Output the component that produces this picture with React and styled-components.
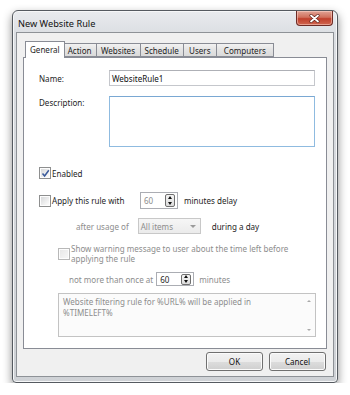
import React from "react";
import styled, { createGlobalStyle } from "styled-components";

const Global = createGlobalStyle`
  html, body { margin: 0; padding: 0; background: #ffffff; }
  body { font-family: "Noto Sans", "Open Sans", sans-serif; font-size: 8.05px; color: #1e1e1e; }
  * { box-sizing: border-box; }
`;

const Window = styled.div`
  margin: 10px 0 0 12px;
  width: 326px;
  height: 373px;
  border: 1px solid #555a60;
  border-radius: 6px 6px 4px 4px;
  background: linear-gradient(#e9ebee 0px, #dcdfe3 22px, #d4d7db 60%, #cfd2d6 100%);
  box-shadow: 0 4px 10px rgba(0, 0, 0, 0.45), inset 0 0 0 1px #f6f7f8;
  display: flex;
  flex-direction: column;
`;

const TitleBar = styled.div`
  height: 21px;
  display: flex;
  align-items: flex-start;
  justify-content: space-between;
  padding-left: 5px;
  padding-right: 4px;
`;

const Title = styled.span`
  font-size: 9.2px;
  color: #111;
  margin-top: 6px;
`;

const CloseButton = styled.div`
  width: 37px;
  height: 15px;
  border: 1px solid #6d2b25;
  border-top: none;
  border-radius: 0 0 4px 4px;
  background: linear-gradient(#e1a496 0%, #d0705c 45%, #c0402c 55%, #d06650 100%);
  box-shadow: inset 0 0 0 1px rgba(255, 220, 210, 0.5);
  display: flex;
  align-items: center;
  justify-content: center;
`;

const Client = styled.div`
  flex: 1;
  margin: 0 3px 5px 3px;
  background: #f0f0f0;
  border: 1px solid #8e9297;
  padding: 8px 6px 0 6px;
  display: flex;
  flex-direction: column;
`;

const TabStrip = styled.div`
  display: flex;
  align-items: flex-end;
  height: 16px;
  padding-left: 2px;
  position: relative;
  z-index: 1;
`;

const Tab = styled.div`
  height: ${(p) => (p.$active ? "17px" : "14px")};
  padding: 0 ${(p) => (p.$active ? "4px" : "4px")};
  padding-bottom: ${(p) => (p.$active ? "2px" : "0")};
  margin-right: ${(p) => (p.$active ? "-1px" : "0")};
  margin-bottom: ${(p) => (p.$active ? "-1px" : "0")};
  margin-left: ${(p) => (p.$first ? "0" : "-1px")};
  border: 1px solid #898c95;
  border-bottom: ${(p) => (p.$active ? "none" : "1px solid #898c95")};
  background: ${(p) => (p.$active ? "#ffffff" : "linear-gradient(#f2f2f2, #e3e3e3 50%, #dadada)")};
  display: flex;
  align-items: center;
  color: #1e1e1e;
  white-space: nowrap;
  position: relative;
  z-index: ${(p) => (p.$active ? 2 : 1)};
  min-width: ${(p) => p.$w}px;
  justify-content: center;
`;

const Panel = styled.div`
  width: 304px;
  height: 292px;
  background: #ffffff;
  border: 1px solid #898c95;
  padding: 12px 10px 0 15px;
  display: flex;
  flex-direction: column;
`;

const FieldRow = styled.div`
  display: grid;
  grid-template-columns: 70px 206px;
  align-items: ${(p) => (p.$top ? "start" : "center")};
  margin-top: ${(p) => p.$mt || 0}px;
`;

const Label = styled.span`
  color: #1e1e1e;
  padding-top: ${(p) => (p.$top ? "1px" : "0")};
`;

const TextInput = styled.div`
  height: ${(p) => p.$h}px;
  border: 1px solid ${(p) => (p.$focus ? "#8fbbe0" : "#c5c7cc")};
  border-top-color: ${(p) => (p.$focus ? "#7aa8d3" : "#aeb0b6")};
  background: #fff;
  padding: 2px 2px;
  color: #111;
  display: flex;
  align-items: ${(p) => (p.$focus ? "flex-start" : "center")};
`;

const Row = styled.div`
  display: flex;
  align-items: center;
  margin-top: ${(p) => p.$mt || 0}px;
  margin-left: ${(p) => p.$ml || 0}px;
  color: ${(p) => (p.$dim ? "#8d8d8d" : "#1e1e1e")};
`;

const RowLabel = styled.span`
  width: ${(p) => p.$w}px;
  flex: none;
`;

const Box = styled.span`
  width: 12px;
  height: 12px;
  flex: none;
  border: 1px solid ${(p) => (p.$dim ? "#b8b8b8" : "#8e8f8f")};
  background: ${(p) =>
    p.$dim
      ? "linear-gradient(135deg, #e6e6e6, #f8f8f8)"
      : "linear-gradient(135deg, #d2d4d6, #f4f4f4 70%, #ffffff)"};
  box-shadow: inset 0 0 0 1px #fdfdfd;
  display: flex;
  align-items: center;
  justify-content: center;
  margin-right: ${(p) => p.$mr || 1}px;
`;

const Spin = styled.div`
  width: 38px;
  height: ${(p) => p.$h}px;
  border: 1px solid #abadb3;
  background: #fff;
  display: flex;
  align-items: center;
  justify-content: space-between;
  padding: 0 2px 0 3px;
  color: ${(p) => (p.$dim ? "#8d8d8d" : "#1e1e1e")};
  margin-left: ${(p) => p.$ml || 0}px;
  margin-right: ${(p) => p.$mr || 0}px;
`;

const SpinButtons = styled.span`
  width: 10px;
  height: ${(p) => p.$h}px;
  border: 1px solid #707070;
  border-radius: 2px;
  background: linear-gradient(#f4f4f4, #dcdcdc);
  display: flex;
  flex-direction: column;
  align-items: center;
  justify-content: space-around;
`;

const Tri = styled.span`
  width: 0;
  height: 0;
  border-left: 2.5px solid transparent;
  border-right: 2.5px solid transparent;
  ${(p) => (p.$down ? "border-top: 3px solid #111;" : "border-bottom: 3px solid #111;")}
`;

const Combo = styled.div`
  width: 63px;
  height: 16px;
  border: 1px solid #c8c8c8;
  background: linear-gradient(#f6f6f6, #ebebeb);
  display: flex;
  align-items: center;
  justify-content: space-between;
  padding: 0 4px 0 2px;
  color: #8d8d8d;
  margin: 0 11px 0 9px;
`;

const ComboArrow = styled.span`
  width: 0;
  height: 0;
  border-left: 3px solid transparent;
  border-right: 3px solid transparent;
  border-top: 3px solid #9a9a9a;
`;

const WarnRow = styled.div`
  display: flex;
  align-items: center;
  margin: 10px 0 0 19px;
  color: #8d8d8d;
  line-height: 10px;
`;

const MessageBox = styled.div`
  margin: 7px 0 0 19px;
  width: 258px;
  height: 44px;
  border: 1px solid #c3c3c3;
  background: #fbfbfb;
  display: flex;
  justify-content: space-between;
  color: #8d8d8d;
  line-height: 11px;
  padding: 2px 4px 0 4px;
`;

const ScrollCol = styled.div`
  display: flex;
  flex-direction: column;
  justify-content: space-between;
  padding: 4px 0 5px;
`;

const SmallTri = styled.span`
  width: 0;
  height: 0;
  border-left: 2px solid transparent;
  border-right: 2px solid transparent;
  ${(p) => (p.$down ? "border-top: 2px solid #a9a9a9;" : "border-bottom: 2px solid #a9a9a9;")}
`;

const Buttons = styled.div`
  display: flex;
  justify-content: flex-end;
  gap: 6px;
  margin-top: 3px;
  padding-right: 1px;
`;

const Button = styled.div`
  width: 57px;
  height: 19px;
  border: 1px solid #707070;
  border-radius: 3px;
  background: linear-gradient(#f2f2f2 0%, #ebebeb 50%, #dddddd 51%, #cfcfcf 100%);
  box-shadow: inset 0 0 0 1px #fbfbfb;
  display: flex;
  align-items: center;
  justify-content: center;
  color: #111;
`;

const Check = () => (
  <svg width="9" height="9" viewBox="0 0 9 9">
    <path d="M1.5 4.5 L3.6 7 L7.8 1.3" fill="none" stroke="#3b5b9c" strokeWidth="1.5" />
  </svg>
);

const tabs = [
  ["General", 39],
  ["Action", 33],
  ["Websites", 45],
  ["Schedule", 43],
  ["Users", 34],
  ["Computers", 58],
];

export default function App() {
  return (
    <>
      <Global />
      <Window>
        <TitleBar>
          <Title>New Website Rule</Title>
          <CloseButton>
            <svg width="11" height="9" viewBox="0 0 11 9">
              <path d="M2 1.5 L9 7.5 M9 1.5 L2 7.5" stroke="#5a2018" strokeWidth="3" strokeLinecap="round" />
              <path d="M2 1.5 L9 7.5 M9 1.5 L2 7.5" stroke="#ffffff" strokeWidth="1.8" strokeLinecap="round" />
            </svg>
          </CloseButton>
        </TitleBar>
        <Client>
          <TabStrip>
            {tabs.map(([t, w], i) => (
              <Tab key={t} $active={i === 0} $first={i === 0} $w={w}>
                {t}
              </Tab>
            ))}
          </TabStrip>
          <Panel>
            <FieldRow>
              <Label>Name:</Label>
              <TextInput $h={16}>WebsiteRule1</TextInput>
            </FieldRow>
            <FieldRow $top $mt={10}>
              <Label $top>Description:</Label>
              <TextInput $h={51} $focus />
            </FieldRow>
            <Row $mt={20}>
              <Box $mr={1}>
                <Check />
              </Box>
              Enabled
            </Row>
            <Row $mt={13}>
              <Box $mr={1} />
              <RowLabel $w={88}>Apply this rule with</RowLabel>
              <Spin $h={17} $mr={6} $dim>
                60
                <SpinButtons $h={13}>
                  <Tri />
                  <Tri $down />
                </SpinButtons>
              </Spin>
              minutes delay
            </Row>
            <Row $mt={9}>
              <Row $dim $ml={37}>after usage of</Row>
              <Combo>
                All items
                <ComboArrow />
              </Combo>
              during a day
            </Row>
            <WarnRow>
              <Box $dim $mr={1} />
              <span>
                Show warning message to user about the time left before
                <br />
                applying the rule
              </span>
            </WarnRow>
            <Row $mt={8} $ml={30}>
              <Row $dim>not more than once at</Row>
              <Spin $h={14} $ml={3} $mr={5}>
                60
                <SpinButtons $h={11}>
                  <Tri />
                  <Tri $down />
                </SpinButtons>
              </Spin>
              <Row $dim>minutes</Row>
            </Row>
            <MessageBox>
              <span>
                Website filtering rule for %URL% will be applied in
                <br />
                %TIMELEFT%
              </span>
              <ScrollCol>
                <SmallTri />
                <SmallTri $down />
              </ScrollCol>
            </MessageBox>
          </Panel>
          <Buttons>
            <Button>OK</Button>
            <Button>Cancel</Button>
          </Buttons>
        </Client>
      </Window>
    </>
  );
}
